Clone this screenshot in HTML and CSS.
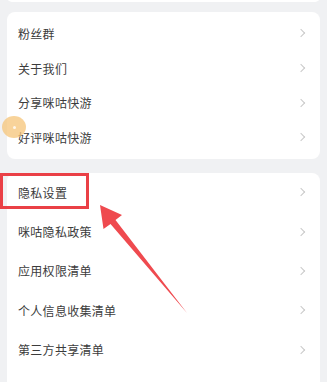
FILE: index.html
```html
<!DOCTYPE html>
<html lang="zh">
<head>
<meta charset="utf-8">
<link rel="stylesheet" href="styles.css">
</head>
<body>
<div class="page">
  <div class="card card-top"></div>
  <div class="card card-a">
    <div class="row"><span>粉丝群</span><i class="chev"></i></div>
    <div class="row"><span>关于我们</span><i class="chev"></i></div>
    <div class="row"><span>分享咪咕快游</span><i class="chev"></i></div>
    <div class="row"><span>好评咪咕快游</span><i class="chev"></i></div>
  </div>
  <div class="card card-b">
    <div class="row"><span>隐私设置</span><i class="chev"></i></div>
    <div class="row"><span>咪咕隐私政策</span><i class="chev"></i></div>
    <div class="row"><span>应用权限清单</span><i class="chev"></i></div>
    <div class="row"><span>个人信息收集清单</span><i class="chev"></i></div>
    <div class="row"><span>第三方共享清单</span><i class="chev"></i></div>
  </div>
  <div class="float-ball"><span></span></div>
  <div class="highlight"></div>
  <svg class="arrow" width="327" height="382" viewBox="0 0 327 382">
    <path d="M100 205 L122 215 L115.5 220 L187 313 L110.5 224 L103.5 229 Z" fill="#ef4a4f"/>
  </svg>
</div>
</body>
</html>
```
FILE: styles.css
```css
html, body {
  margin: 0;
  padding: 0;
  background: #f0f1f3;
}
.page {
  position: relative;
  width: 327px;
  height: 382px;
  overflow: hidden;
  display: flex;
  flex-direction: column;
  gap: 10px;
  padding: 0 7px;
  box-sizing: border-box;
  font-family: "Noto Sans CJK SC", "Liberation Sans", sans-serif;
}
.card {
  background: #fff;
  border-radius: 8px;
}
.card-top {
  height: 10px;
  margin-top: -8px;
  flex: none;
}
.card-a {
  padding: 4px 0;
  flex: none;
}
.card-a .row {
  height: 34.7px;
}
.card-b {
  margin-top: 4px;
  flex: 1;
  border-radius: 8px 8px 0 0;
}
.card-b .row {
  height: 39.3px;
}
.row {
  display: flex;
  align-items: center;
  justify-content: space-between;
  padding: 0 14px 0 11px;
  font-size: 12px;
  letter-spacing: 0.3px;
  color: #3c3c3c;
}
.chev {
  width: 5px;
  height: 5px;
  border-top: 1.2px solid #c9c9c9;
  border-right: 1.2px solid #c9c9c9;
  transform: rotate(45deg);
  margin-right: 2px;
}
.float-ball {
  position: absolute;
  left: 2px;
  top: 116px;
  width: 24px;
  height: 22px;
  border-radius: 50%;
  background: rgba(246, 196, 120, 0.75);
  display: flex;
  align-items: center;
  justify-content: center;
}
.float-ball span {
  width: 3px;
  height: 3px;
  border-radius: 50%;
  background: rgba(255, 255, 255, 0.8);
}
.highlight {
  position: absolute;
  left: 0;
  top: 173px;
  width: 89px;
  height: 36px;
  box-sizing: border-box;
  border: 3.5px solid #ea4046;
}
.arrow {
  position: absolute;
  left: 0;
  top: 0;
}
```
